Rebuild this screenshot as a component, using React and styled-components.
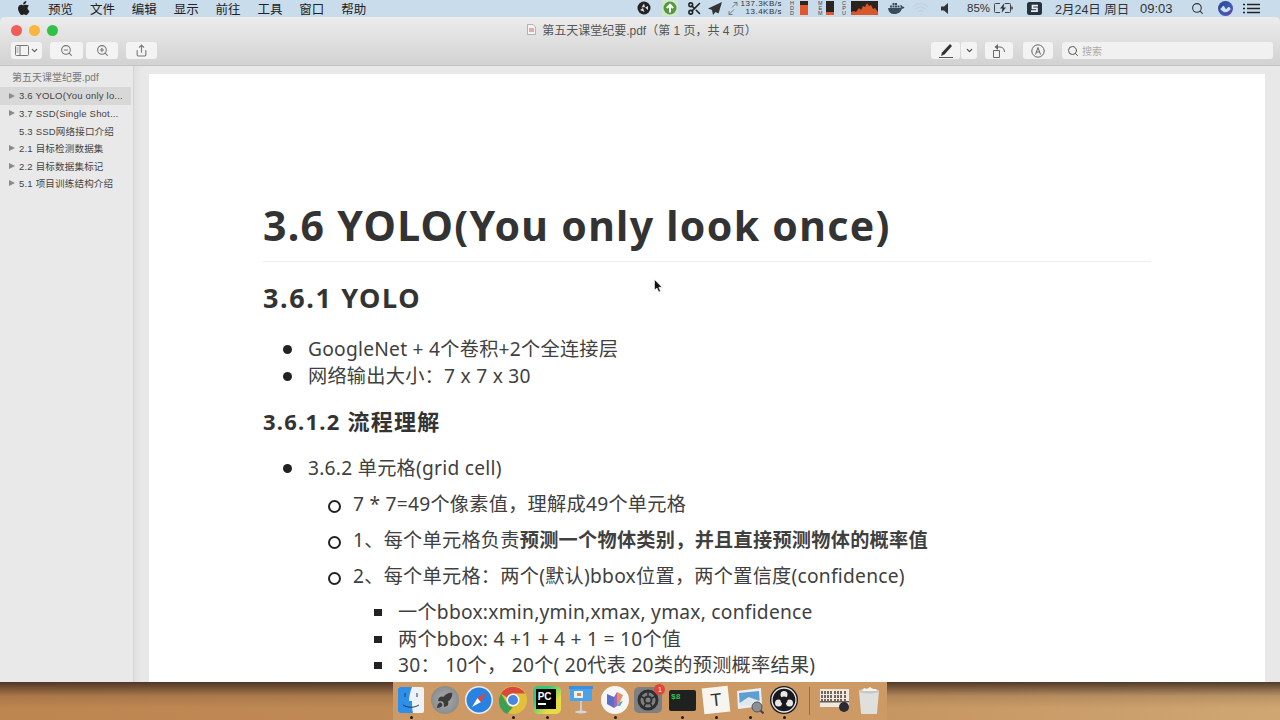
import styled, { createGlobalStyle } from "styled-components";
import { Scissors, Search, ZoomIn, ZoomOut, Share, ChevronDown, Wifi, Rocket } from "lucide-react";

const GlobalStyle = createGlobalStyle`
    html, body{
        margin: 0;
        padding: 0;
        overflow: hidden;
    }
    *{
        box-sizing: border-box;
    }
`
const DOC = `"Noto Sans", "Noto Sans CJK SC", sans-serif`;
const UI = `"Liberation Sans", "Noto Sans CJK SC", sans-serif`;

const outline = [
    { label: "3.6 YOLO(You only lo...", arrow: true, active: true },
    { label: "3.7 SSD(Single Shot...", arrow: true },
    { label: "5.3 SSD网络接口介绍" },
    { label: "2.1 目标检测数据集", arrow: true },
    { label: "2.2 目标数据集标记", arrow: true },
    { label: "5.1 项目训练结构介绍", arrow: true },
];
const menus = ["预览", "文件", "编辑", "显示", "前往", "工具", "窗口", "帮助"];

const AppleLogo = () => (
    <svg width="12" height="14" viewBox="0 0 12 14">
        <path fill="#222" d="M8.3 0c.1 1-.3 1.9-.9 2.5-.6.7-1.400 1.100-2.200 1-.1-.9.3-1.800.9-2.400C6.700.5 7.600.1 8.300 0zM11 4.800c-.9.6-1.400 1.400-1.400 2.500 0 1.200.7 2.100 1.900 2.600-.4 1-.8 1.800-1.400 2.600-.6.8-1.200 1.500-2 1.500s-1.100-.5-2.100-.5-1.300.5-2.100.5-1.400-.7-2-1.600C.6 10.700 0 9 0 7.500c0-2.500 1.600-3.800 3.200-3.800.9 0 1.600.6 2.200.6.500 0 1.400-.6 2.400-.6 1.300 0 2.400.4 3.200 1.100z" />
    </svg>
);

const StackedLabel = ({ text, $ml }) => (
    <Stacked $ml={$ml}>{text.split("").map((c, i) => <span key={i}>{c}</span>)}</Stacked>
);

const PdfIcon = () => (
    <svg width="9" height="11" viewBox="0 0 9 11">
        <path fill="#f4f4f4" stroke="#999" strokeWidth="0.7" d="M.5.5h5.500l2.500 2.500v7.500H.5z" />
        <path stroke="#c66" strokeWidth="1" d="M2 5h5M2 7h5" />
    </svg>
);

const SidebarToggleIcon = () => (
    <svg width="14" height="11" viewBox="0 0 14 11" fill="none" stroke="#777">
        <rect x="0.5" y="0.5" width="13" height="10" rx="1" />
        <path d="M5 .5v10" />
        <path d="M1.500 3h2M1.500 5h2M1.500 7h2" strokeWidth="0.7" />
    </svg>
);

const HighlightIcon = () => (
    <svg width="16" height="14" viewBox="0 0 16 14">
        <path fill="#333" d="M12 0l2 2-7.500 8.500-3.500 1.500 1-3.500z" />
        <path stroke="#555" d="M1 13.500h14" />
    </svg>
);

const RotateIcon = () => (
    <svg width="14" height="14" viewBox="0 0 14 14" fill="none" stroke="#666">
        <path d="M1.500 6.500h6v7h-6z" />
        <path d="M5 3h3c2.500 0 4.500 2 4.500 5" />
        <path fill="#666" d="M6 0v6L2.500 3z" stroke="none" />
    </svg>
);

const MarkupIcon = () => (
    <svg width="14" height="14" viewBox="0 0 14 14" fill="none" stroke="#666">
        <circle cx="7" cy="7" r="6.200" />
        <path d="M4.500 10.500L7 3.500l2.500 7M5.500 8h3" />
    </svg>
);

const BadgeCircleIcon = () => (
    <svg width="14" height="14" viewBox="0 0 14 14">
        <circle cx="7" cy="7" r="6.500" fill="#222" />
        <path fill="#ddd" d="M7 2.500l1 3.500-3.500.5zM3 9l3-2 1.500 4zM11 9L8 6.500l3-1.500z" />
    </svg>
);

const UploadBadgeIcon = () => (
    <svg width="16" height="16" viewBox="0 0 16 16">
        <rect width="16" height="16" fill="#d3e6d0" />
        <circle cx="8" cy="8" r="6.500" fill="#4f9a3c" />
        <path fill="none" stroke="#fff" strokeWidth="2" d="M8 12.500V5M4.800 8L8 4.700 11.200 8" />
    </svg>
);

const PlaneIcon = () => (
    <svg width="14" height="13" viewBox="0 0 14 13">
        <path fill="#333" d="M14 0L0 6.500l4 1.500 1 5 2.500-3 3 1.500z" />
    </svg>
);

const ArrowsIcon = () => (
    <svg width="10" height="13" viewBox="0 0 10 13" fill="none" stroke="#666" strokeWidth="0.8">
        <path d="M4 5.500l5-5M5.500.5H9V4" />
        <path d="M6 7.500l-5 5M4.500 12.500H1V9" />
    </svg>
);

const LevelBar = ({ fill }) => (
    <Meter>
        <MeterFill style={{ height: `${fill}%` }} />
    </Meter>
);

const CpuGraph = () => (
    <svg width="27" height="14" viewBox="0 0 27 14">
        <rect width="27" height="14" fill="#2b2320" />
        <path fill="#d9582a" d="M0 14V11l3-1 2 1 3-4 2 2 2-4 2 1 2-4 2 3 2-1 2 4 2-1 3 4v3z" />
    </svg>
);

const DockerIcon = () => (
    <svg width="17" height="12" viewBox="0 0 17 12">
        <path fill="#394d5c" d="M0 6h12.500c.3-1 .2-1.700-.3-2.500l1-.6c.7.5 1 1.200 1 1.800.8-.2 1.600 0 2.300.5-.7 1.200-1.600 1.500-2.700 1.500C13 10 10 12 6 12 2.500 12 .5 10 0 6z" />
        <path fill="#394d5c" d="M2 3.500h2v2H2zM4.500 3.500h2v2h-2zM7 3.500h2v2H7zM9.500 3.500h2v2h-2zM4.500 1h2v2h-2zM7 1h2v2H7z" />
    </svg>
);

const SpeakerIcon = () => (
    <svg width="9" height="11" viewBox="0 0 9 11">
        <path fill="#333" d="M0 3.500h3L7 0v11L3 7.500H0z" />
    </svg>
);

const BatteryIcon = () => (
    <svg width="20" height="10" viewBox="0 0 20 10" fill="none">
        <path stroke="#444" d="M6 .5H1.500a1 1 0 0 0-1 1v7a1 1 0 0 0 1 1H6M11 .5h4.500a1 1 0 0 1 1 1v7a1 1 0 0 1-1 1H11" />
        <path fill="#333" d="M10.500 0L6 5.500h2.500L7.500 10 12 4.500H9.500z" />
        <path stroke="#444" strokeWidth="1.500" d="M18 3.500v3" />
    </svg>
);

const ScanIcon = () => (
    <svg width="15" height="13" viewBox="0 0 15 13">
        <rect width="15" height="13" rx="2.500" fill="#26323d" />
        <path fill="none" stroke="#e8eef2" strokeWidth="1.700" d="M11 3.700H5.500v2.600h4.500v2.900H4" />
    </svg>
);

const SiriIcon = () => (
    <svg width="15" height="15" viewBox="0 0 14 14">
        <defs>
            <linearGradient id="siri" x1="0" y1="0" x2="1" y2="1">
                <stop offset="0" stopColor="#2b3d8f" />
                <stop offset="0.6" stopColor="#3a5db8" />
                <stop offset="1" stopColor="#7a3590" />
            </linearGradient>
        </defs>
        <circle cx="7" cy="7" r="7" fill="url(#siri)" />
        <path fill="#cfe0ff" d="M2 7.500c1.500-.5 2-3 3-3s1.500 3 2.500 3 1.500-2 2.500-2 1.500 1.500 2 2c-1.500 1.500-3 3-5 3s-3.500-1.500-5-3z" />
    </svg>
);

const ListIcon = () => (
    <svg width="17" height="11" viewBox="0 0 17 11" stroke="#222" strokeWidth="1.500">
        <path d="M0 1.500h2M4 1.500h13M0 5.500h2M4 5.500h13M0 9.500h2M4 9.500h13" />
    </svg>
);

const Cursor = () => (
    <CursorWrap>
        <svg width="9" height="14" viewBox="0 0 9 14">
            <path fill="#111" stroke="#fff" strokeWidth="0.6" d="M.5.500v10.500l2.500-2 1.700 4 1.800-.8-1.700-3.900h3.200z" />
        </svg>
    </CursorWrap>
);

const FinderIcon = () => (
    <svg width="26" height="26" viewBox="0 0 26 26">
        <rect width="26" height="26" rx="2" fill="#eef2f6" />
        <path fill="#2f8fe8" d="M2 0h12c-2 5-3 10-3 14h3c0 4 0 8 1 12H2c-1 0-2-1-2-2V2c0-1 1-2 2-2z" />
        <path stroke="#1b3f6a" fill="none" d="M7 6v4M19 6v4M5 18c5 3 11 3 16 0" />
    </svg>
);

const LaunchIcon = () => (
    <LaunchDisc><Rocket size={17} color="#3c3c3c" fill="#3c3c3c" /></LaunchDisc>
);

const SafariIcon = () => (
    <svg width="28" height="28" viewBox="0 0 28 28">
        <circle cx="14" cy="14" r="14" fill="#e8edf2" />
        <circle cx="14" cy="14" r="12.500" fill="#2a82e0" />
        <path fill="#fff" d="M7 21l5.500-9 3.500 4z" />
        <path fill="#e4423a" d="M21 7l-5 9-3.500-4z" />
    </svg>
);

const ChromeIcon = () => (
    <svg width="28" height="28" viewBox="0 0 28 28">
        <circle cx="14" cy="14" r="14" fill="#e2c13a" />
        <path fill="#d9483b" d="M2 7.500A14 14 0 0 1 26 7.500H14a6.500 6.500 0 0 0-6 4z" />
        <path fill="#3c9f54" d="M2 7.500L8.500 18a6.500 6.500 0 0 0 5.500 3l-6 7a14 14 0 0 1-8-14c0-2.500.8-4.500 2-6.500z" />
        <circle cx="14" cy="14" r="6.500" fill="#fff" />
        <circle cx="14" cy="14" r="5" fill="#4a86e0" />
    </svg>
);

const PyCharmIcon = () => (
    <PyWrap>
        <PyInner>
            <span>PC</span>
            <i />
        </PyInner>
    </PyWrap>
);

const KeynoteIcon = () => (
    <svg width="24" height="28" viewBox="0 0 24 28">
        <rect width="24" height="3" fill="#3c8fe0" />
        <rect x="1" y="3" width="22" height="12" fill="#4aa3ea" />
        <rect x="5" y="5" width="9" height="7" fill="#e9f2fa" />
        <rect x="8" y="7" width="4" height="3" fill="#e08a3a" />
        <rect x="11" y="15" width="2" height="10" fill="#c9cdd0" />
        <ellipse cx="12" cy="26" rx="6" ry="1.500" fill="#d4d6d8" />
    </svg>
);

const NoteIcon = () => (
    <svg width="28" height="28" viewBox="0 0 28 28">
        <circle cx="14" cy="14" r="14" fill="#f6f6f6" />
        <path fill="#5a6fc8" d="M6 8l7 3v11l-7-4z" />
        <path fill="#9a6ac0" d="M13 11l3-5v14l-3 2z" />
        <path fill="#e89060" d="M16 6l6 3-3 7-3 4z" />
        <path fill="#4ab0b8" d="M16 20l3-4 3-1-3 5z" />
    </svg>
);

const PrefsIcon = () => (
    <PrefsWrap>
        <svg width="28" height="26" viewBox="0 0 28 26" fill="none">
            <rect width="28" height="26" rx="5" fill="#7d7f80" />
            <circle cx="14" cy="13" r="9" stroke="#2e2f30" strokeWidth="3" />
            <circle cx="14" cy="13" r="3.500" stroke="#2e2f30" strokeWidth="2" />
            <path stroke="#2e2f30" strokeWidth="1.500" d="M14 4v5M6 9l5 2.500M22 9l-5 2.500M9 21l3-5M19 21l-3-5" />
        </svg>
        <Badge>1</Badge>
    </PrefsWrap>
);

const TerminalIcon = () => <TerminalBox>$8</TerminalBox>;

const TyporaIcon = () => <TyporaBox>T</TyporaBox>;

const PreviewIcon = () => (
    <svg width="28" height="27" viewBox="0 0 28 27">
        <path fill="#eceff2" d="M1 4l24-3 1 18-24 3z" />
        <path fill="#5f9ed0" d="M3 6l20-2 .6 10-20 2z" />
        <path fill="#dfe8ef" d="M3.600 16l9-6 11 4 .3 3-20 2z" />
        <circle cx="21" cy="20" r="5" fill="#8b9096" stroke="#555" />
        <path stroke="#444" strokeWidth="2" d="M24.500 23.500l3 3" />
    </svg>
);

const ObsIcon = () => (
    <svg width="28" height="28" viewBox="0 0 28 28" fill="none">
        <circle cx="14" cy="14" r="14" fill="#1a1a1e" />
        <circle cx="14" cy="14" r="12" stroke="#e8e8e8" strokeWidth="1.300" />
        <circle cx="14" cy="8.500" r="3.500" fill="#e8e8e8" />
        <circle cx="8.500" cy="17" r="3.500" fill="#e8e8e8" />
        <circle cx="19.500" cy="17" r="3.500" fill="#e8e8e8" />
        <circle cx="14" cy="14" r="3.500" fill="#1a1a1e" />
    </svg>
);

const ArchiveIcon = () => (
    <svg width="30" height="26" viewBox="0 0 30 26">
        <rect y="2" width="29" height="18" fill="#efe9df" />
        <path stroke="#4a3a34" strokeWidth="1.500" d="M2 4v10M5 4v10M8 4v10M11 4v10M15 4v10M18 4v10M21 4v10M25 4v10" strokeDasharray="3 1" />
        <rect y="14" width="29" height="1.500" fill="#6a5a52" />
        <circle cx="24" cy="20" r="5" fill="#2a2a30" />
    </svg>
);

const TrashIcon = () => (
    <svg width="24" height="28" viewBox="0 0 24 28">
        <path fill="#dfe0dc" d="M2 5h20l-2 22c0 .6-.5 1-1 1H5c-.5 0-1-.4-1-1z" />
        <ellipse cx="12" cy="5" rx="10.500" ry="2.500" fill="#c9c7c0" />
        <path fill="#f4f4f2" d="M5 5l2-3 3 1 3-2 3 2 3 0 1 2z" />
    </svg>
);

const App = () =>{
    return(
        <Screen>
            <GlobalStyle />
            <MenuBar>
                <AppleSlot><AppleLogo /></AppleSlot>
                {menus.map((m) => <MenuLabel key={m}>{m}</MenuLabel>)}
                <StatusArea>
                    <Status $w={25}><BadgeCircleIcon /></Status>
                    <Status $w={25}><UploadBadgeIcon /></Status>
                    <Status $w={21}><Scissors size={15} color="#222" strokeWidth={2.5} /></Status>
                    <Status $w={20}><PlaneIcon /></Status>
                    <Status $w={12}><ArrowsIcon /></Status>
                    <NetSpeed><span>137.3KB/s</span><span>13.4KB/s</span></NetSpeed>
                    <Status $w={17}><StackedLabel text="HDD" $ml={7} /></Status>
                    <Status $w={18}><LevelBar fill={72} /></Status>
                    <Status $w={8}><StackedLabel text="MEM" /></Status>
                    <Status $w={16}><LevelBar fill={22} /></Status>
                    <Status $w={9}><StackedLabel text="CPU" /></Status>
                    <Status $w={37}><CpuGraph /></Status>
                    <Status $w={24}><DockerIcon /></Status>
                    <Status $w={29}><Wifi size={17} color="#c3d2de" /></Status>
                    <Status $w={26}><SpeakerIcon /></Status>
                    <Percent>85%</Percent>
                    <Status $w={33}><BatteryIcon /></Status>
                    <Status $w={28}><ScanIcon /></Status>
                    <Clock>2月24日 周日</Clock>
                    <ClockTime>09:03</ClockTime>
                    <Status $w={27}><Search size={13} color="#333" /></Status>
                    <Status $w={25}><SiriIcon /></Status>
                    <Status $w={17}><ListIcon /></Status>
                </StatusArea>
            </MenuBar>

            <Window>
                <TitleBar>
                    <TitleRow>
                        <Lights>
                            <Light $color="#f25e57" />
                            <Light $color="#f8b73c" />
                            <Light $color="#32c148" />
                        </Lights>
                        <DocTitle><PdfIcon />第五天课堂纪要.pdf（第 1 页，共 4 页）</DocTitle>
                    </TitleRow>
                    <ToolRow>
                        <ToolGroup>
                            <ToolButton $w={31}>
                                <SidebarToggleIcon />
                                <ChevronDown size={9} color="#555" strokeWidth={3} />
                            </ToolButton>
                            <ZoomGroup>
                                <ToolButton $w={33}><ZoomOut size={13} color="#777" /></ToolButton>
                                <ToolButton $w={32}><ZoomIn size={13} color="#777" /></ToolButton>
                            </ZoomGroup>
                            <ToolButton $w={31}><Share size={13} color="#777" /></ToolButton>
                        </ToolGroup>
                        <ToolGroup>
                            <SplitGroup>
                                <ToolButton $w={29}><HighlightIcon /></ToolButton>
                                <ToolButton $w={16}><ChevronDown size={9} color="#444" strokeWidth={3} /></ToolButton>
                            </SplitGroup>
                            <ToolButton $w={28} $mr={2}><RotateIcon /></ToolButton>
                            <ToolButton $w={30} $mr={1}><MarkupIcon /></ToolButton>
                            <SearchBox>
                                <Search size={12} color="#555" />
                                搜索
                            </SearchBox>
                        </ToolGroup>
                    </ToolRow>
                </TitleBar>

                <Body>
                    <Sidebar>
                        <SidebarTitle>第五天课堂纪要.pdf</SidebarTitle>
                        {outline.map((o) => (
                            <OutlineRow key={o.label} $active={o.active}>
                                <Arrow $show={o.arrow} />
                                {o.label}
                            </OutlineRow>
                        ))}
                    </Sidebar>
                    <Viewer>
                        <Page>
                            <H1>3.6 YOLO(You only look once)</H1>
                            <H2>3.6.1 YOLO</H2>
                            <List>
                                <li>GoogleNet + 4个卷积+2个全连接层</li>
                                <li>网络输出大小：7 x 7 x 30</li>
                            </List>
                            <H3>3.6.1.2 流程理解</H3>
                            <List>
                                <li>
                                    3.6.2 单元格(grid cell)
                                    <CircleList>
                                        <li>7 * 7=49个像素值，理解成49个单元格</li>
                                        <li>1、每个单元格负责<strong>预测一个物体类别，并且直接预测物体的概率值</strong></li>
                                        <li>
                                            2、每个单元格：两个(默认)bbox位置，两个置信度(confidence)
                                            <SquareList>
                                                <li>一个bbox:xmin,ymin,xmax, ymax, confidence</li>
                                                <li>两个bbox: 4 +1 + 4 + 1 = 10个值</li>
                                                <li>30： 10个， 20个( 20代表 20类的预测概率结果)</li>
                                            </SquareList>
                                        </li>
                                    </CircleList>
                                </li>
                            </List>
                            <Cursor />
                        </Page>
                    </Viewer>
                </Body>
            </Window>

            <Desktop>
                <Dock>
                    <DockItem $running><FinderIcon /></DockItem>
                    <DockItem><LaunchIcon /></DockItem>
                    <DockItem><SafariIcon /></DockItem>
                    <DockItem $running><ChromeIcon /></DockItem>
                    <DockItem $running><PyCharmIcon /></DockItem>
                    <DockItem><KeynoteIcon /></DockItem>
                    <DockItem $running><NoteIcon /></DockItem>
                    <DockItem><PrefsIcon /></DockItem>
                    <DockItem $running><TerminalIcon /></DockItem>
                    <DockItem $running><TyporaIcon /></DockItem>
                    <DockItem $running><PreviewIcon /></DockItem>
                    <DockItem $running><ObsIcon /></DockItem>
                    <DockDivider />
                    <DockItem><ArchiveIcon /></DockItem>
                    <DockItem><TrashIcon /></DockItem>
                </Dock>
            </Desktop>
        </Screen>
    );
}

const Screen = styled.div`
    width: 1280px;
    height: 720px;
    overflow: hidden;
    display: grid;
    grid-template-rows: 17px 665px 38px;
    background: #c9dcec;
`
const MenuBar = styled.div`
    position: relative;
    display: flex;
    align-items: center;
    height: 16px;
    padding-left: 18px;
    background: #c9dcec;
    font-family: ${UI};
    font-size: 12.500px;
    color: #222;
`
const AppleSlot = styled.div`
    width: 30px;
    display: flex;
    align-items: center;
`
const MenuLabel = styled.span`
    width: 25px;
    margin-right: 16.900px;
    white-space: nowrap;
`
const StatusArea = styled.div`
    position: absolute;
    top: 0;
    left: 637px;
    height: 16px;
    display: flex;
    align-items: center;
`
const Status = styled.div`
    width: ${(p) => p.$w}px;
    height: 16px;
    display: flex;
    align-items: center;
    flex-shrink: 0;
`
const NetSpeed = styled.div`
    width: 43px;
    padding-right: 1px;
    display: flex;
    flex-direction: column;
    align-items: flex-end;
    font-size: 8px;
    line-height: 8px;
    letter-spacing: 0.500px;
    white-space: nowrap;
    color: #333;
`
const Stacked = styled.div`
    margin-left: ${(p) => p.$ml || 0}px;
    display: flex;
    flex-direction: column;
    align-items: center;
    font-size: 5.500px;
    line-height: 5px;
    color: #444;
`
const Meter = styled.div`
    position: relative;
    width: 8px;
    height: 14px;
    background: #2a2522;
`
const MeterFill = styled.div`
    position: absolute;
    left: 0;
    right: 0;
    bottom: 0;
    background: #e2582a;
`
const Percent = styled.span`
    width: 27px;
    font-size: 11.500px;
    color: #333;
`
const Clock = styled.span`
    width: 85px;
    font-size: 12.500px;
    color: #333;
    white-space: nowrap;
`
const ClockTime = styled.span`
    width: 51px;
    font-size: 13px;
    color: #333;
`
const Window = styled.div`
    height: 665px;
    display: flex;
    flex-direction: column;
    overflow: hidden;
    border-radius: 5px 5px 0 0;
    background: #e6e6e6;
`
const TitleBar = styled.div`
    height: 49px;
    padding: 0 7px 0 11px;
    border-bottom: 1px solid #c4c4c4;
    background: linear-gradient(#ececec, #d2d2d2);
`
const TitleRow = styled.div`
    position: relative;
    height: 25px;
    display: flex;
    align-items: center;
    justify-content: center;
`
const Lights = styled.div`
    position: absolute;
    left: 0;
    top: 8px;
    display: flex;
    gap: 7px;
`
const Light = styled.span`
    width: 11px;
    height: 11px;
    border-radius: 50%;
    background: ${(p) => p.$color};
`
const DocTitle = styled.div`
    display: flex;
    align-items: center;
    gap: 6px;
    font-family: ${UI};
    font-size: 12px;
    color: #555;
`
const ToolRow = styled.div`
    display: flex;
    justify-content: space-between;
`
const ToolGroup = styled.div`
    display: flex;
    gap: 8px;
`
const ZoomGroup = styled.div`
    display: flex;
    gap: 3px;
`
const SplitGroup = styled.div`
    display: flex;
    gap: 1px;
`
const ToolButton = styled.div`
    width: ${(p) => p.$w}px;
    height: 17px;
    margin-right: ${(p) => p.$mr || 0}px;
    display: flex;
    align-items: center;
    justify-content: center;
    gap: 1px;
    border-radius: 3px;
    background: #f3f3f3;
`
const SearchBox = styled.div`
    width: 211px;
    height: 17px;
    padding-left: 5px;
    display: flex;
    align-items: center;
    gap: 3px;
    border-radius: 3px;
    background: #f1f1f1;
    font-family: ${UI};
    font-size: 10px;
    color: #aaa;
`
const Body = styled.div`
    flex: 1;
    min-height: 0;
    display: flex;
`
const Sidebar = styled.div`
    width: 134px;
    padding-top: 4px;
    background: #e9e9e9;
    border-right: 1px solid #d4d4d4;
    font-family: ${UI};
    color: #333;
`
const SidebarTitle = styled.div`
    height: 17px;
    padding-left: 12px;
    font-size: 10px;
    line-height: 15px;
    color: #777;
`
const OutlineRow = styled.div`
    height: 17.500px;
    margin-right: 2px;
    display: flex;
    align-items: center;
    padding-left: 9px;
    gap: 3px;
    font-size: 9.500px;
    letter-spacing: 0.200px;
    white-space: nowrap;
    color: #444;
    background: ${(p) => (p.$active ? "#d8d8d8" : "transparent")};
`
const Arrow = styled.span`
    width: 0;
    height: 0;
    margin-right: 1px;
    border-left: 6px solid ${(p) => (p.$show ? "#8a8a8a" : "transparent")};
    border-top: 3.500px solid transparent;
    border-bottom: 3.500px solid transparent;
`
const Viewer = styled.div`
    flex: 1;
    min-width: 0;
    padding: 8px 15px 0 15px;
    background: linear-gradient(90deg, #e0e0e0, #e8e8e8 8px);
`
const Page = styled.div`
    position: relative;
    height: 1000px;
    padding: 127px 114px 0;
    background: #fff;
    font-family: ${DOC};
    font-size: 19.200px;
    line-height: 26.600px;
    letter-spacing: 0.250px;
    color: #404040;
`
const H1 = styled.h1`
    margin: 0;
    height: 61px;
    border-bottom: 1px solid #eee;
    font-size: 41px;
    line-height: 49px;
    letter-spacing: 1.300px;
    font-weight: 700;
    color: #333;
`
const H2 = styled.h2`
    margin: 18px 0 0;
    font-size: 27px;
    line-height: 36px;
    letter-spacing: 1.600px;
    font-weight: 700;
    color: #333;
`
const H3 = styled.h3`
    margin: 19px 0 0;
    font-size: 22px;
    line-height: 27px;
    letter-spacing: 1.250px;
    font-weight: 700;
    color: #333;
`
const List = styled.ul`
    margin: 20px 0 0;
    padding-left: 45px;
    list-style: none;
    & > li{
        position: relative;
    }
    & > li::before{
        content: "";
        position: absolute;
        left: -25px;
        top: 9px;
        width: 9px;
        height: 9px;
        border-radius: 50%;
        background: #222;
    }
`
const CircleList = styled.ul`
    margin: 9px 0 0;
    padding-left: 45px;
    list-style: none;
    & > li{
        position: relative;
    }
    & > li + li{
        margin-top: 9.300px;
    }
    & > li::before{
        content: "";
        position: absolute;
        left: -25px;
        top: 9px;
        width: 9px;
        height: 9px;
        border: 2px solid #222;
        border-radius: 50%;
        background: #fff;
    }
`
const SquareList = styled.ul`
    margin: 10px 0 0;
    padding-left: 45px;
    list-style: none;
    & > li{
        position: relative;
    }
    & > li::before{
        content: "";
        position: absolute;
        left: -24px;
        top: 10px;
        width: 8px;
        height: 7px;
        background: #222;
    }
`
const CursorWrap = styled.div`
    position: absolute;
    left: 505px;
    top: 205px;
    line-height: 0;
`
const Desktop = styled.div`
    display: flex;
    justify-content: center;
    background:
        linear-gradient(rgba(60, 40, 30, 0.85), rgba(60, 40, 30, 0.15) 14px, rgba(60, 40, 30, 0) 26px),
        linear-gradient(90deg, #bd8550, #c08c58 50%, #cfa672);
`
const Dock = styled.div`
    width: 494px;
    height: 38px;
    padding: 2px 3px 0;
    display: flex;
    justify-content: space-between;
    background: #cd9a66;
`
const DockItem = styled.div`
    position: relative;
    width: 30px;
    height: 32px;
    display: flex;
    align-items: center;
    justify-content: center;
    &::after{
        content: "";
        display: ${(p) => (p.$running ? "block" : "none")};
        position: absolute;
        left: 14px;
        bottom: -3px;
        width: 3px;
        height: 3px;
        border-radius: 50%;
        background: #2a1a10;
    }
`
const DockDivider = styled.div`
    width: 1px;
    height: 28px;
    margin: 3px 6px 0;
    background: #94704a;
`
const LaunchDisc = styled.div`
    width: 28px;
    height: 28px;
    display: flex;
    align-items: center;
    justify-content: center;
    border-radius: 50%;
    background: radial-gradient(#a9abac, #7d8080);
`
const PyWrap = styled.div`
    width: 28px;
    height: 28px;
    padding: 3px;
    border-radius: 5px;
    background: linear-gradient(135deg, #34c97a 30%, #e6dc46 70%);
`
const PyInner = styled.div`
    width: 20px;
    height: 20px;
    padding: 2px;
    background: #000;
    color: #fff;
    font-family: ${UI};
    font-size: 10px;
    font-weight: 700;
    line-height: 11px;
    span{
        display: block;
    }
    i{
        display: block;
        width: 8px;
        height: 1.500px;
        margin-top: 1px;
        background: #fff;
    }
`
const PrefsWrap = styled.div`
    position: relative;
    line-height: 0;
`
const Badge = styled.span`
    position: absolute;
    top: -3px;
    right: -3px;
    width: 11px;
    height: 11px;
    border-radius: 50%;
    background: #e0443c;
    color: #fff;
    font-family: ${UI};
    font-size: 7px;
    line-height: 11px;
    text-align: center;
`
const TerminalBox = styled.div`
    width: 27px;
    height: 21px;
    padding: 2px 2px;
    border-radius: 2px;
    background: #1f2120;
    color: #35c24a;
    font-family: "Liberation Mono", monospace;
    font-size: 8px;
    font-weight: 700;
    line-height: 9px;
`
const TyporaBox = styled.div`
    width: 26px;
    height: 26px;
    transform: rotate(-6deg);
    background: #f7f5ef;
    color: #333;
    font-family: "Liberation Sans", sans-serif;
    font-size: 18px;
    line-height: 26px;
    text-align: center;
`
export default App;
